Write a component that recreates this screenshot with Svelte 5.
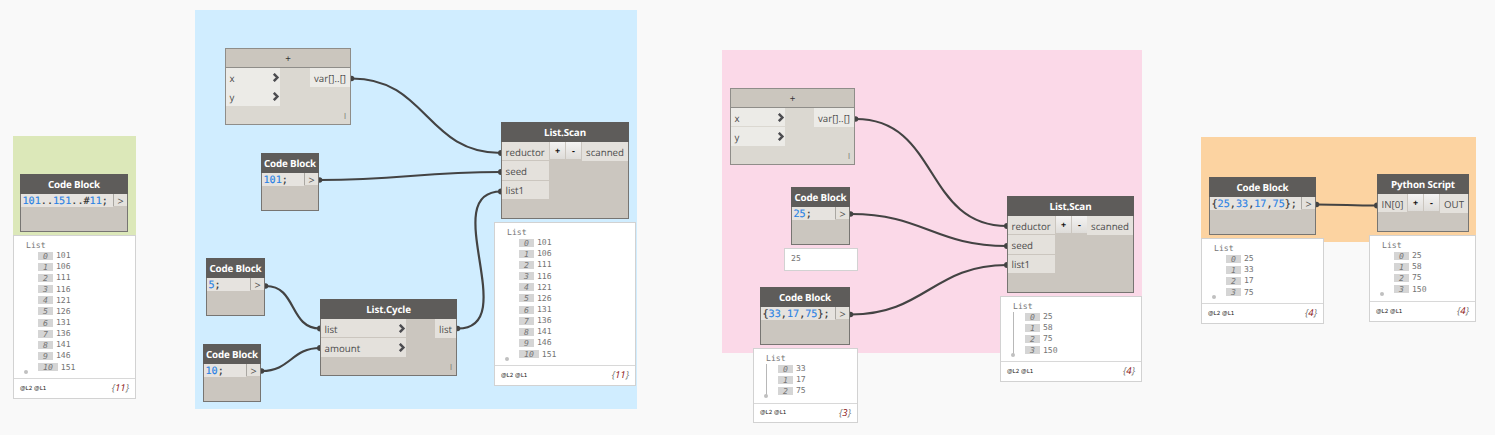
<script>
  const groups = [
    { x: 13, y: 136, w: 123, h: 100, color: '#dce8b9' },
    { x: 195, y: 10, w: 442, h: 399, color: '#d0edff' },
    { x: 722, y: 50, w: 420, h: 303, color: '#fbd9e8' },
    { x: 1201, y: 137, w: 275, h: 105, color: '#fcd3a1' }
  ];

  const nodes = [
    { x: 20, y: 174, w: 108, h: 58, title: 'Code Block', code: '101..151..#11;' },
    { x: 225, y: 48, w: 126, h: 77, title: '+', light: true, ins: ['x', 'y'], inW: 54, arrows: true, out: 'var[]..[]', outW: 40, lacing: 'l', flush: true },
    { x: 261, y: 153, w: 58, h: 58, title: 'Code Block', code: '101;' },
    { x: 206, y: 258, w: 59, h: 58, title: 'Code Block', code: '5;' },
    { x: 203, y: 344, w: 58, h: 58, title: 'Code Block', code: '10;' },
    { x: 320, y: 299, w: 137, h: 77, title: 'List.Cycle', ins: ['list', 'amount'], inW: 85, arrows: true, out: 'list', outW: 21, lacing: 'l' },
    { x: 501, y: 122, w: 128, h: 97, title: 'List.Scan', ins: ['reductor', 'seed', 'list1'], inW: 47, buttons: true, out: 'scanned', outW: 46 },
    { x: 730, y: 88, w: 125, h: 77, title: '+', light: true, ins: ['x', 'y'], inW: 54, arrows: true, out: 'var[]..[]', outW: 40, lacing: 'l' },
    { x: 791, y: 187, w: 59, h: 58, title: 'Code Block', code: '25;' },
    { x: 760, y: 287, w: 90, h: 58, title: 'Code Block', code: '{33,17,75};' },
    { x: 1007, y: 196, w: 127, h: 97, title: 'List.Scan', ins: ['reductor', 'seed', 'list1'], inW: 47, buttons: true, out: 'scanned', outW: 46 },
    { x: 1209, y: 177, w: 107, h: 58, title: 'Code Block', code: '{25,33,17,75};' },
    { x: 1377, y: 174, w: 92, h: 58, title: 'Python Script', ins: ['IN[0]'], inW: 29, buttons: true, out: 'OUT', outW: 28 }
  ];

  const eleven = [101, 106, 111, 116, 121, 126, 131, 136, 141, 146, 151];
  const previews = [
    { x: 13, y: 235, w: 123, h: 164, foot: 20, items: eleven },
    { x: 494, y: 222, w: 142, h: 164, foot: 20, items: eleven },
    { x: 753, y: 348, w: 105, h: 75, foot: 19, items: [33, 17, 75], line: true },
    { x: 1000, y: 296, w: 142, h: 86, foot: 20, items: [25, 58, 75, 150], line: true },
    { x: 1201, y: 238, w: 123, h: 86, foot: 20, items: [25, 33, 17, 75] },
    { x: 1369, y: 235, w: 107, h: 87, foot: 20, items: [25, 58, 75, 150] }
  ];

  const wires = [
    [352, 78.5, 501, 153],
    [320, 180, 501, 172],
    [266, 286, 320, 328.5],
    [262, 371, 320, 348],
    [458, 328.5, 501, 191.5],
    [856, 119, 1007, 226],
    [851, 214, 1007, 246],
    [851, 314.5, 1007, 265],
    [1317, 204.5, 1377, 205.5]
  ];

  function curve([x1, y1, x2, y2]) {
    const d = 0.45 * Math.hypot(x2 - x1, y2 - y1);
    return `M${x1} ${y1}C${x1 + d} ${y1} ${x2 - d} ${y2} ${x2} ${y2}`;
  }

  const tokens = (code) => code.match(/\d+|\D+/g);
</script>

<main>
  {#each groups as g}
    <div class="group" style="left:{g.x}px;top:{g.y}px;width:{g.w}px;height:{g.h}px;background:{g.color}"></div>
  {/each}

  <svg class="wires" width="1495" height="435">
    {#each wires as w}
      <path d={curve(w)} />
      <circle cx={w[0] - 0.5} cy={w[1]} r="2.8" />
      <circle cx={w[2]} cy={w[3]} r="3" />
    {/each}
  </svg>

  {#each nodes as n}
    <section class="node" class:light={n.light} style="left:{n.x}px;top:{n.y}px;width:{n.w}px;height:{n.h}px">
      <header>{n.title}</header>
      <div class="body">
        {#if n.code}
          <div class="code">{#each tokens(n.code) as t}<span class:num={/\d/.test(t)}>{t}</span>{/each}</div>
          <div class="emit">&gt;</div>
        {:else}
          <div class="ins" class:flush={n.flush} style="width:{n.inW}px">
            {#each n.ins as label}
              <div class="port">
                <span>{label}</span>
                {#if n.arrows}
                  <svg width="8" height="9" viewBox="0 0 8 9"><path d="M1.8 0.8L5.4 4.5L1.8 8.2" /></svg>
                {/if}
              </div>
            {/each}
          </div>
          {#if n.buttons}
            <div class="buttons"><b>+</b><b>-</b></div>
          {/if}
          <div class="port out" style="width:{n.outW}px">{n.out}</div>
        {/if}
      </div>
      {#if n.lacing}<div class="lacing">{n.lacing}</div>{/if}
    </section>
  {/each}

  {#each previews as p}
    <aside class="preview" style="left:{p.x}px;top:{p.y}px;width:{p.w}px;height:{p.h}px">
      <div class="tree" class:line={p.line}>
        <div class="root">List</div>
        {#each p.items as v, i}
          <div class="row"><i>{i}</i><span>{v}</span></div>
        {/each}
      </div>
      <footer style="height:{p.foot}px">
        <span class="levels">@L2 @L1</span>
        <span class="count">{'{'}<em>{p.items.length}</em>{'}'}</span>
      </footer>
    </aside>
  {/each}
  <aside class="preview single">25</aside>
</main>

<style>
  :global(body) { background: #f9f9f9; }
  main {
    position: relative;
    width: 1495px;
    height: 435px;
    overflow: hidden;
    font-family: 'Open Sans', sans-serif;
    color: #4c4c4c;
    text-rendering: geometricPrecision;
  }
  .group, .wires, .node, .preview { position: absolute; box-sizing: border-box; }
  .wires { left: 0; top: 0; fill: #434343; }
  .wires path { fill: none; stroke: #434343; stroke-width: 2.2; }

  .node {
    display: flex;
    flex-direction: column;
    background: #cbc6bf;
    border: 1px solid #777572;
    font-size: 9.7px;
  }
  header {
    flex: none;
    height: 19px;
    margin: -1px -1px 0;
    padding: 1px 0 0;
    background: #5e5c5a;
    color: #fff;
    font-weight: 700;
    font-size: 9.8px;
    letter-spacing: -0.15px;
    line-height: 20px;
    text-align: center;
    white-space: nowrap;
  }
  .light { background: #dbd8d1; border-color: #8f8d89; }
  .light header {
    height: 18px;
    margin: 0;
    padding: 0;
    border-bottom: 1px solid #8f8d89;
    background: #cbc6be;
    color: #333;
    font-weight: 400;
    line-height: 19px;
  }
  .body { display: flex; align-items: flex-start; }
  .code {
    flex: 1;
    height: 13px;
    padding-left: 1.5px;
    background: #e6e3df;
    color: #333;
    font: 10.15px/15px 'DejaVu Sans Mono', monospace;
    -webkit-text-stroke: 0.15px;
    white-space: pre;
  }
  .num { color: #2a82e4; }
  .emit {
    width: 13px;
    height: 12px;
    margin-left: 1px;
    background: #e4e1dc;
    box-shadow: -1px 0 #aaa7a2;
    font-size: 10.8px;
    line-height: 15px;
    text-align: center;
  }
  .ins { display: flex; flex-direction: column; gap: 1px; }
  .port {
    display: flex;
    align-items: center;
    justify-content: space-between;
    box-sizing: border-box;
    height: 18.4px;
    padding: 2px 0 0 3.6px;
    background: #e4e1dc;
    line-height: 17px;
    white-space: nowrap;
  }
  .light .port { background: #ecebe7; }
  .flush { background: #ecebe7; }
  .port svg { margin: -2px 0 0; fill: none; stroke: #4c4c50; stroke-width: 2.5; }
  .out { margin-left: auto; padding-left: 0; justify-content: center; height: 19px; }
  .buttons { display: flex; gap: 1px; margin-left: 1px; }
  .buttons b {
    width: 15px;
    height: 17px;
    background: linear-gradient(#f4f3f2, #dedcd9);
    color: #111;
    font-size: 9px;
    line-height: 17px;
    text-align: center;
  }
  .lacing { margin: auto 4px 2px auto; font-size: 8px; line-height: 10px; color: #77726c; }

  .preview {
    display: flex;
    flex-direction: column;
    justify-content: space-between;
    background: #fff;
    border: 1px solid #d2d2d2;
    color: #747474;
    font: 8.15px/11.2px 'DejaVu Sans Mono', monospace;
  }
  .tree { position: relative; padding: 4px 0 0 12px; }
  .tree::after {
    content: '';
    position: absolute;
    left: 10px;
    bottom: -1px;
    width: 4px;
    height: 4px;
    border-radius: 50%;
    background: #c0c0c0;
  }
  .line::before {
    content: '';
    position: absolute;
    left: 11.5px;
    top: 15px;
    bottom: 1px;
    width: 1px;
    background: #b8b8b8;
  }
  .root { height: 10.2px; }
  .row { display: flex; align-items: center; gap: 3px; height: 11.15px; padding-left: 12px; }
  .row i {
    padding: 0 5px;
    height: 8px;
    background: #d5d5d5;
    line-height: 8.5px;
  }
  footer {
    display: flex;
    align-items: center;
    justify-content: space-between;
    box-sizing: border-box;
    padding: 0 6px;
    border-top: 1px solid #d8d8d8;
  }
  .levels { font: 5.6px/8px 'DejaVu Sans', sans-serif; color: #111; }
  .count { padding-bottom: 1px; font: italic 9.6px/12px 'Open Sans', sans-serif; }
  .count em { color: #8b1010; }
  .single { left: 784px; top: 248px; width: 74px; height: 23px; padding: 4px 0 0 6px; justify-content: flex-start; }
</style>
